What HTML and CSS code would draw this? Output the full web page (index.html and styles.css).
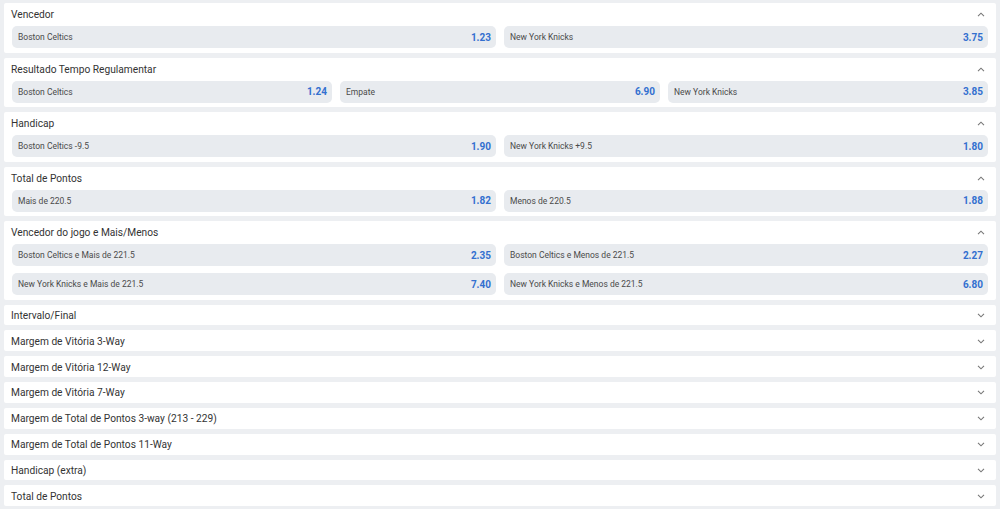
FILE: index.html
```html
<!DOCTYPE html>
<html lang="pt">
<head>
<meta charset="utf-8">
<title>Mercados</title>
<link rel="stylesheet" href="styles.css">
</head>
<body>
<div class="markets">
  <section class="market">
    <div class="market-head"><span class="market-title">Vencedor</span><svg class="chev" viewBox="0 0 8 5"><path d="M1 4.2 4 1.2 7 4.2"/></svg></div>
    <div class="odds cols-2">
      <button class="odd"><span class="label">Boston Celtics</span><span class="price">1.23</span></button>
      <button class="odd"><span class="label">New York Knicks</span><span class="price">3.75</span></button>
    </div>
  </section>
  <section class="market">
    <div class="market-head"><span class="market-title">Resultado Tempo Regulamentar</span><svg class="chev" viewBox="0 0 8 5"><path d="M1 4.2 4 1.2 7 4.2"/></svg></div>
    <div class="odds cols-3">
      <button class="odd"><span class="label">Boston Celtics</span><span class="price">1.24</span></button>
      <button class="odd"><span class="label">Empate</span><span class="price">6.90</span></button>
      <button class="odd"><span class="label">New York Knicks</span><span class="price">3.85</span></button>
    </div>
  </section>
  <section class="market">
    <div class="market-head"><span class="market-title">Handicap</span><svg class="chev" viewBox="0 0 8 5"><path d="M1 4.2 4 1.2 7 4.2"/></svg></div>
    <div class="odds cols-2">
      <button class="odd"><span class="label">Boston Celtics -9.5</span><span class="price">1.90</span></button>
      <button class="odd"><span class="label">New York Knicks +9.5</span><span class="price">1.80</span></button>
    </div>
  </section>
  <section class="market">
    <div class="market-head"><span class="market-title">Total de Pontos</span><svg class="chev" viewBox="0 0 8 5"><path d="M1 4.2 4 1.2 7 4.2"/></svg></div>
    <div class="odds cols-2">
      <button class="odd"><span class="label">Mais de 220.5</span><span class="price">1.82</span></button>
      <button class="odd"><span class="label">Menos de 220.5</span><span class="price">1.88</span></button>
    </div>
  </section>
  <section class="market">
    <div class="market-head"><span class="market-title">Vencedor do jogo e Mais/Menos</span><svg class="chev" viewBox="0 0 8 5"><path d="M1 4.2 4 1.2 7 4.2"/></svg></div>
    <div class="odds cols-2">
      <button class="odd"><span class="label">Boston Celtics e Mais de 221.5</span><span class="price">2.35</span></button>
      <button class="odd"><span class="label">Boston Celtics e Menos de 221.5</span><span class="price">2.27</span></button>
      <button class="odd"><span class="label">New York Knicks e Mais de 221.5</span><span class="price">7.40</span></button>
      <button class="odd"><span class="label">New York Knicks e Menos de 221.5</span><span class="price">6.80</span></button>
    </div>
  </section>
  <section class="market collapsed"><div class="market-head"><span class="market-title">Intervalo/Final</span><svg class="chev" viewBox="0 0 8 5"><path d="M1 0.8 4 3.8 7 0.8"/></svg></div></section>
  <section class="market collapsed"><div class="market-head"><span class="market-title">Margem de Vitória 3-Way</span><svg class="chev" viewBox="0 0 8 5"><path d="M1 0.8 4 3.8 7 0.8"/></svg></div></section>
  <section class="market collapsed"><div class="market-head"><span class="market-title">Margem de Vitória 12-Way</span><svg class="chev" viewBox="0 0 8 5"><path d="M1 0.8 4 3.8 7 0.8"/></svg></div></section>
  <section class="market collapsed"><div class="market-head"><span class="market-title">Margem de Vitória 7-Way</span><svg class="chev" viewBox="0 0 8 5"><path d="M1 0.8 4 3.8 7 0.8"/></svg></div></section>
  <section class="market collapsed"><div class="market-head"><span class="market-title">Margem de Total de Pontos 3-way (213 - 229)</span><svg class="chev" viewBox="0 0 8 5"><path d="M1 0.8 4 3.8 7 0.8"/></svg></div></section>
  <section class="market collapsed"><div class="market-head"><span class="market-title">Margem de Total de Pontos 11-Way</span><svg class="chev" viewBox="0 0 8 5"><path d="M1 0.8 4 3.8 7 0.8"/></svg></div></section>
  <section class="market collapsed"><div class="market-head"><span class="market-title">Handicap (extra)</span><svg class="chev" viewBox="0 0 8 5"><path d="M1 0.8 4 3.8 7 0.8"/></svg></div></section>
  <section class="market collapsed"><div class="market-head"><span class="market-title">Total de Pontos</span><svg class="chev" viewBox="0 0 8 5"><path d="M1 0.8 4 3.8 7 0.8"/></svg></div></section>
</div>
</body>
</html>
```
FILE: styles.css
```css
* { box-sizing: border-box; }
html, body { background: #edeff2; }
body {
  margin: 3px 4px;
  font-family: Roboto, "Liberation Sans", Arial, sans-serif;
  color: #333;
}
.markets {
  display: flex;
  flex-direction: column;
  gap: 5px;
}
.market {
  background: #fff;
  border-radius: 2px;
  padding: 0 8px 4.5px;
}
.market.collapsed { padding-bottom: 0; }
.market-head {
  height: 23px;
  display: flex;
  align-items: center;
  justify-content: space-between;
}
.market.collapsed .market-head {
  height: 20.85px;
  padding-top: 1px;
}
.market-title {
  font-size: 10.2px;
  color: #333;
  margin-left: -1px;
}
.chev {
  width: 8px;
  height: 5px;
  margin-right: 3px;
  fill: none;
  stroke: #777;
  stroke-width: 1.1;
}
.odds {
  display: grid;
  column-gap: 8px;
  row-gap: 7px;
}
.cols-2 { grid-template-columns: 1fr 1fr; }
.cols-3 { grid-template-columns: 1fr 1fr 1fr; }
.odd {
  height: 22px;
  border: 0;
  border-radius: 5px;
  background: #e8ebef;
  display: flex;
  align-items: center;
  justify-content: space-between;
  padding: 0 5px 0 6px;
  font-family: inherit;
  cursor: pointer;
}
.label {
  font-size: 8.5px;
  color: #4a4a4a;
}
.price {
  font-size: 10px;
  font-weight: 700;
  color: #3370cf;
}
```
